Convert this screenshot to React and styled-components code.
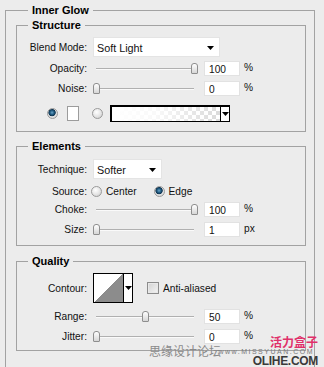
import React from "react";
import styled, { createGlobalStyle } from "styled-components";

const Global = createGlobalStyle`
  html, body { margin: 0; padding: 0; }
  html { overflow: hidden; }
  body {
    background: #ececec;
    font-family: "Liberation Sans", Arial, sans-serif;
    font-size: 10.2px;
    color: #111;
    width: 324px;
    height: 367px;
    overflow: hidden;
    position: relative;
  }
`;

const Page = styled.div`
  padding-top: 4px;
  height: 363px;
  overflow: hidden;
`;

const Outer = styled.fieldset`
  margin: 0 0 0 5px;
  width: 310px;
  box-sizing: border-box;
  border: 1px solid #a2a2a2;
  padding: 0 8px 40px 10px;
  min-width: 0;
`;

const Group = styled.fieldset`
  margin: ${(p) => p.$mt}px 0 0 0;
  border: 1px solid #a2a2a2;
  padding: ${(p) => p.$pt}px 0 ${(p) => p.$pb}px 0;
  min-width: 0;
`;

const Legend = styled.legend`
  font-weight: bold;
  font-size: 11px;
  line-height: 13px;
  padding: 0 4px;
  margin-left: ${(p) => p.$ml}px;
  color: #000;
`;

const Row = styled.div`
  display: grid;
  grid-template-columns: 70px 1fr;
  column-gap: 6px;
  align-items: center;
  height: ${(p) => p.$h}px;
  margin-top: ${(p) => p.$mt || 0}px;
`;

const Label = styled.span`
  text-align: right;
  white-space: nowrap;
`;

const Controls = styled.div`
  display: flex;
  align-items: center;
  height: 100%;
`;

const SelectBox = styled.div`
  width: ${(p) => p.$w}px;
  height: 20px;
  box-sizing: border-box;
  background: #fff;
  border: 1px solid #e4e4e4;
  display: flex;
  align-items: center;
  justify-content: space-between;
  padding: 2px 5px 0 3px;
  font-size: 10.8px;
`;

const Arrow = () => (
  <svg width="7" height="4" viewBox="0 0 7 4">
    <path d="M0 0H7L3.5 4Z" fill="#000" />
  </svg>
);

const SliderWrap = styled.div`
  position: relative;
  width: 105px;
  height: 15px;
  flex: none;
`;

const Track = styled.div`
  position: absolute;
  left: 3px;
  right: 4px;
  top: 7px;
  height: 1px;
  background: #b0b0b0;
  box-shadow: 0 1px 0 #fafafa;
`;

const Thumb = styled.div`
  position: absolute;
  top: 2px;
  width: 7px;
  height: 11px;
  box-sizing: border-box;
  border: 1px solid #8e8e8e;
  border-radius: 3px 3px 1px 1px;
  background: linear-gradient(#ffffff, #d6d6d6);
`;

const Slider = ({ value }) => (
  <SliderWrap>
    <Track />
    <Thumb style={{ left: `${value * 0.975}px` }} />
  </SliderWrap>
);

const NumInput = styled.div`
  width: 36px;
  height: 15px;
  box-sizing: border-box;
  background: #fff;
  border: 1px solid #e2e2e2;
  margin-left: 6px;
  padding: 1px 0 0 4px;
  line-height: 13px;
`;

const Unit = styled.span`
  margin-left: 4px;
  margin-top: -2px;
`;

const Radio = styled.span`
  display: inline-block;
  flex: none;
  width: 11px;
  height: 11px;
  box-sizing: border-box;
  border-radius: 50%;
  border: 1px solid #9a9a9a;
  background: ${(p) =>
    p.$on
      ? "radial-gradient(circle at 45% 40%, #6aa4c8 0, #1f5a80 28%, #0f3450 45%, #e6e6e6 55%, #c8c8c8 100%)"
      : "radial-gradient(circle at 40% 35%, #ffffff 0, #e4e4e4 55%, #c6c6c6 100%)"};
  margin-left: ${(p) => p.$ml || 0}px;
`;

const RadioText = styled.span`
  margin-left: 4px;
`;

const ColorRow = styled.div`
  display: flex;
  align-items: center;
  height: 16px;
  margin-top: 9px;
  padding-left: 30px;
`;

const Swatch = styled.span`
  width: 12px;
  height: 15px;
  box-sizing: border-box;
  border: 1px solid #9c9c9c;
  background: #fff;
  margin-left: 9px;
`;

const GradBox = styled.div`
  display: flex;
  width: 120px;
  height: 17px;
  box-sizing: border-box;
  border: 1px solid #000;
  border-width: 2px 1px 1px 2px;
  margin-left: 7px;
`;

const GradFill = styled.div`
  flex: 1;
  background:
    linear-gradient(to right, #fff 0%, rgba(255,255,255,0.85) 40%, rgba(255,255,255,0.1) 100%),
    conic-gradient(#d6d6d6 25%, #fff 0 50%, #d6d6d6 0 75%, #fff 0) 0 0 / 8px 8px;
`;

const DropPart = styled.div`
  width: 8px;
  border-left: 1px solid #000;
  background: #fff;
  display: flex;
  align-items: center;
  justify-content: center;
`;

const ContourBox = styled.div`
  display: flex;
  width: 40px;
  height: 30px;
  box-sizing: border-box;
  border: 1px solid #000;
  background: #fff;
`;

const ContourCurve = styled.div`
  width: 29px;
  background: linear-gradient(to top left, #8c8c8c 50%, #ffffff 50%);
`;

const ContourDrop = styled.div`
  flex: 1;
  border-left: 1px solid #000;
  display: flex;
  align-items: center;
  justify-content: center;
`;

const Check = styled.span`
  width: 12px;
  height: 12px;
  box-sizing: border-box;
  border: 1px solid #8c8c8c;
  background: linear-gradient(135deg, #d2d2d2, #f4f4f4);
  box-shadow: inset 0 0 0 1px #e8e8e8;
  margin-left: 14px;
`;

const CheckText = styled.span`
  margin-left: 4px;
`;

const Watermark = styled.div`
  position: absolute;
  right: ${(p) => p.$r}px;
  top: ${(p) => p.$t}px;
  white-space: nowrap;
  font-family: ${(p) => p.$font};
  font-size: ${(p) => p.$size}px;
  font-weight: ${(p) => p.$weight || "normal"};
  color: ${(p) => p.$color};
  line-height: 1;
  letter-spacing: ${(p) => p.$ls || 0}px;
`;

const SliderRow = ({ label, value, num, unit, mt }) => (
  <Row $h={15} $mt={mt}>
    <Label>{label}</Label>
    <Controls>
      <Slider value={value} />
      <NumInput>{num}</NumInput>
      <Unit>{unit}</Unit>
    </Controls>
  </Row>
);

export default function App() {
  return (
    <Page>
      <Global />
      <Outer>
        <Legend $ml={12}>Inner Glow</Legend>
        <Group $mt={2} $pt={5} $pb={10}>
          <Legend $ml={11}>Structure</Legend>
          <Row $h={20}>
            <Label>Blend Mode:</Label>
            <Controls>
              <SelectBox $w={127}>
                <span>Soft Light</span>
                <Arrow />
              </SelectBox>
            </Controls>
          </Row>
          <SliderRow label="Opacity:" value={100} num="100" unit="%" mt={4} />
          <SliderRow label="Noise:" value={0} num="0" unit="%" mt={5} />
          <ColorRow>
            <Radio $on />
            <Swatch />
            <Radio $ml={13} />
            <GradBox>
              <GradFill />
              <DropPart>
                <Arrow />
              </DropPart>
            </GradBox>
          </ColorRow>
        </Group>
        <Group $mt={8} $pt={6} $pb={8}>
          <Legend $ml={11}>Elements</Legend>
          <Row $h={20}>
            <Label>Technique:</Label>
            <Controls>
              <SelectBox $w={69}>
                <span>Softer</span>
                <Arrow />
              </SelectBox>
            </Controls>
          </Row>
          <Row $h={14} $mt={5}>
            <Label>Source:</Label>
            <Controls>
              <Radio $ml={-2} />
              <RadioText>Center</RadioText>
              <Radio $on $ml={17} />
              <RadioText>Edge</RadioText>
            </Controls>
          </Row>
          <SliderRow label="Choke:" value={100} num="100" unit="%" mt={4} />
          <SliderRow label="Size:" value={0} num="1" unit="px" mt={5} />
        </Group>
        <Group $mt={9} $pt={5} $pb={6}>
          <Legend $ml={11}>Quality</Legend>
          <Row $h={30}>
            <Label>Contour:</Label>
            <Controls>
              <ContourBox>
                <ContourCurve />
                <ContourDrop>
                  <Arrow />
                </ContourDrop>
              </ContourBox>
              <Check />
              <CheckText>Anti-aliased</CheckText>
            </Controls>
          </Row>
          <SliderRow label="Range:" value={50} num="50" unit="%" mt={6} />
          <SliderRow label="Jitter:" value={0} num="0" unit="%" mt={5} />
        </Group>
      </Outer>
      <Watermark $r={103} $t={345} $size={12} $color="#8a8a8a" $font={'"Noto Sans CJK SC", sans-serif'}>
        思缘设计论坛
      </Watermark>
      <Watermark $r={10} $t={348} $size={7} $ls={1.5} $color="#7a7a7a" $font={'"Liberation Sans", Arial, sans-serif'}>
        www.MISSYUAN.COM
      </Watermark>
      <Watermark $r={6} $t={336} $size={12} $weight="bold" $color="#e0306a" $font={'"Noto Sans CJK SC", sans-serif'}>
        活力盒子
      </Watermark>
      <Watermark $r={6} $t={355} $size={12} $weight="bold" $color="#3a3a3a" $ls={-0.3} $font={'"Liberation Sans", Arial, sans-serif'}>
        OLIHE.COM
      </Watermark>
    </Page>
  );
}
